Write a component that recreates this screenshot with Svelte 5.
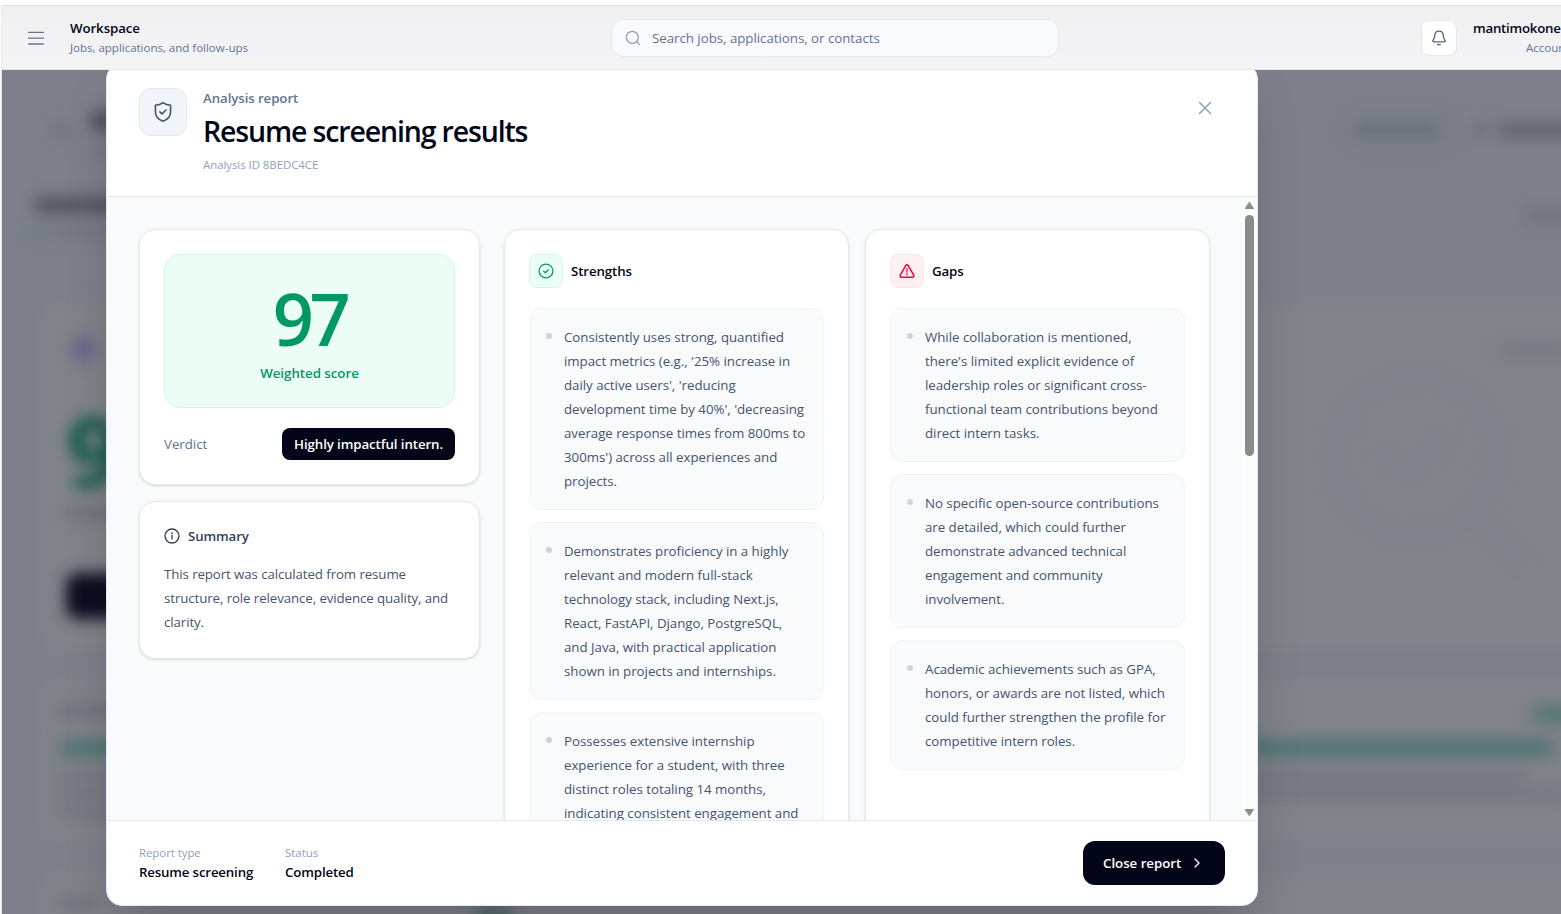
<script lang="ts">
  interface Finding {
    lines: string[];
  }

  let query = $state('');

  const strengths: Finding[] = [
    {
      lines: [
        'Consistently uses strong, quantified',
        "impact metrics (e.g., '25% increase in",
        "daily active users', 'reducing",
        "development time by 40%', 'decreasing",
        'average response times from 800ms to',
        "300ms') across all experiences and",
        'projects.'
      ]
    },
    {
      lines: [
        'Demonstrates proficiency in a highly',
        'relevant and modern full-stack',
        'technology stack, including Next.js,',
        'React, FastAPI, Django, PostgreSQL,',
        'and Java, with practical application',
        'shown in projects and internships.'
      ]
    },
    {
      lines: [
        'Possesses extensive internship',
        'experience for a student, with three',
        'distinct roles totaling 14 months,',
        'indicating consistent engagement and'
      ]
    }
  ];

  const gaps: Finding[] = [
    {
      lines: [
        'While collaboration is mentioned,',
        "there's limited explicit evidence of",
        'leadership roles or significant cross-',
        'functional team contributions beyond',
        'direct intern tasks.'
      ]
    },
    {
      lines: [
        'No specific open-source contributions',
        'are detailed, which could further',
        'demonstrate advanced technical',
        'engagement and community',
        'involvement.'
      ]
    },
    {
      lines: [
        'Academic achievements such as GPA,',
        'honors, or awards are not listed, which',
        'could further strengthen the profile for',
        'competitive intern roles.'
      ]
    }
  ];
</script>

{#snippet findings(items: Finding[])}
  <ul class="findings">
    {#each items as item}
      <li>
        <span class="bullet"></span>
        <p>
          {#each item.lines as line}
            <span class="line">{line}</span>
          {/each}
        </p>
      </li>
    {/each}
  </ul>
{/snippet}

<div class="shell">
  <header class="topbar">
    <svg class="menu" width="16" height="16" viewBox="0 0 16 16">
      <path d="M.6 2.4h14.8M.6 8.2h14.8M.6 14h14.8" />
    </svg>
    <div class="workspace">
      <strong>Workspace</strong>
      <span>Jobs, applications, and follow-ups</span>
    </div>
    <label class="search">
      <svg width="16" height="16" viewBox="0 0 16 16">
        <circle cx="7.3" cy="7.3" r="6" />
        <path d="m11.8 11.8 2.6 2.6" />
      </svg>
      <input type="text" placeholder="Search jobs, applications, or contacts" bind:value={query} />
    </label>
    <button class="bell" aria-label="Notifications">
      <svg width="18" height="18" viewBox="0 0 18 18">
        <path d="M9 2.200c-2.600 0-4.200 1.700-4.300 4.300-.1 2.400-.5 3.300-1.500 4.500-.8 1-.4 1.900.7 1.900h10.200c1.100 0 1.500-.9.7-1.900-1-1.200-1.400-2.100-1.500-4.500C13.200 3.900 11.600 2.200 9 2.200Z" />
        <path d="M7.700 15.400c.8.4 1.800.4 2.600 0" />
      </svg>
    </button>
    <div class="account">
      <strong>mantimokone</strong>
      <span>Account</span>
    </div>
  </header>

  <main class="stage">
    <!-- dimmed dashboard behind the dialog -->
    <svg class="backdrop" width="1559" height="844" viewBox="2 70 1559 844">
      <g class="panels">
        <rect x="40" y="302" width="1600" height="350" rx="16" />
        <rect x="40" y="678" width="1600" height="164" rx="16" />
        <rect x="40" y="870" width="1600" height="120" rx="16" />
      </g>
      <g class="blurred">
        <circle cx="61" cy="130" r="7" fill="#6c6e79" />
        <rect x="91" y="112" width="120" height="18" fill="#4d4e5c" />
        <rect x="92" y="146" width="100" height="8" fill="#747681" />
        <rect x="36" y="197" width="120" height="16" fill="#50515e" />
        <circle cx="38" cy="232" r="6" fill="#647d7d" />
        <rect x="52" y="228" width="90" height="9" fill="#70727d" />
        <rect x="1344" y="112" width="110" height="36" rx="8" fill="#7a7e87" />
        <rect x="1356" y="124" width="82" height="13" fill="#696e7a" />
        <circle cx="1481" cy="130" r="7" fill="#696b72" />
        <rect x="1500" y="123" width="80" height="14" fill="#60616c" />
        <rect x="1526" y="209" width="60" height="13" fill="#70727d" />
        <circle cx="84" cy="349" r="13" fill="#67658d" />
        <text x="67" y="487">9</text>
        <rect x="68" y="508" width="80" height="11" fill="#6d6e79" />
        <rect x="66" y="573" width="200" height="46" rx="11" fill="#0c0d20" />
        <rect x="1502" y="345" width="70" height="11" fill="#777883" />
        <g class="magnifier">
          <circle cx="1415" cy="457" r="80" />
          <path d="m1473 513 44 44M1386 457l22 17 35-34" />
        </g>
        <rect x="60" y="705" width="70" height="12" fill="#6e6f7a" />
        <rect x="60" y="740" width="1494" height="16" rx="8" fill="#4d7371" />
        <rect x="1533" y="706" width="50" height="17" rx="6" fill="#527671" />
        <rect x="60" y="770" width="1466" height="11" fill="#73747f" />
        <rect x="60" y="789" width="1510" height="11" fill="#73747f" />
        <rect x="60" y="807" width="60" height="11" fill="#73747f" />
        <rect x="62" y="898" width="36" height="11" fill="#6d6e79" />
        <rect x="476" y="908" width="36" height="16" fill="#47635f" />
      </g>
    </svg>

    <section class="dialog" role="dialog" aria-label="Resume screening results">
      <div class="dialog-head">
        <div class="shield">
          <svg width="24" height="24" viewBox="0 0 24 24">
            <path d="M12 2.600C9.600 4.300 7.200 5 4.400 5.300v6.300c0 5 3 8.200 7.600 9.700 4.600-1.500 7.600-4.700 7.600-9.700V5.300C16.800 5 14.400 4.300 12 2.600Z" />
            <path d="m8.900 11.800 2.100 2 4-3.800" />
          </svg>
        </div>
        <div class="heading">
          <p class="eyebrow">Analysis report</p>
          <h1>Resume screening results</h1>
          <p class="report-id">Analysis ID 8BEDC4CE</p>
        </div>
        <button class="close" aria-label="Close">
          <svg width="20" height="20" viewBox="0 0 20 20">
            <path d="m4.500 4.500 11 11M15.500 4.500l-11 11" />
          </svg>
        </button>
      </div>

      <div class="dialog-body">
        <div class="content">
          <div class="overview">
            <div class="card">
              <div class="score">
                <span class="value">97</span>
                <span class="caption">Weighted score</span>
              </div>
              <div class="verdict">
                <span>Verdict</span>
                <strong>Highly impactful intern.</strong>
              </div>
            </div>
            <div class="card summary">
              <h2>
                <svg width="16" height="16" viewBox="0 0 16 16">
                  <circle cx="8" cy="8" r="7" />
                  <path d="M8 7.400v3.700M8 4.600v1.200" />
                </svg>
                Summary
              </h2>
              <p>
                <span class="line">This report was calculated from resume</span>
                <span class="line">structure, role relevance, evidence quality, and</span>
                <span class="line">clarity.</span>
              </p>
            </div>
          </div>

          <div class="columns">
            <div class="card">
              <h3>
                <span class="tile good">
                  <svg width="16" height="16" viewBox="0 0 16 16">
                    <circle cx="8" cy="8" r="6.900" />
                    <path d="m5.700 8.200 1.600 1.500 3-3" />
                  </svg>
                </span>
                Strengths
              </h3>
              {@render findings(strengths)}
            </div>
            <div class="card">
              <h3>
                <span class="tile bad">
                  <svg width="16" height="16" viewBox="0 0 16 16">
                    <path d="M6.900 2.400 1.300 12.200c-.5 1 0 2 1.100 2h11.200c1.100 0 1.600-1 1.100-2L9.100 2.400c-.5-.9-1.700-.9-2.200 0Z" />
                    <path class="thin" d="M8 5.400v3.800M8 10.700v1.300" />
                  </svg>
                </span>
                Gaps
              </h3>
              {@render findings(gaps)}
            </div>
          </div>
        </div>
        <div class="scrollbar">
          <svg width="9" height="7" viewBox="0 0 9 7"><path d="M4.500 .5 8.500 6.500h-8z" /></svg>
          <div class="thumb"></div>
          <svg width="9" height="7" viewBox="0 0 9 7"><path d="M4.500 6.500 8.500 .5h-8z" /></svg>
        </div>
      </div>

      <footer>
        <div class="meta">
          <span>Report type</span>
          <strong>Resume screening</strong>
        </div>
        <div class="meta">
          <span>Status</span>
          <strong>Completed</strong>
        </div>
        <button class="done">
          Close report
          <svg width="16" height="16" viewBox="0 0 16 16"><path d="m6 4 4 4-4 4" /></svg>
        </button>
      </footer>
    </section>
  </main>
</div>

<style>
  :global(body) {
    background: #fff;
    overflow: hidden;
  }

  * {
    box-sizing: border-box;
  }

  h1, h2, h3, p, ul {
    margin: 0;
    padding: 0;
  }

  strong {
    font-weight: 600;
    letter-spacing: -0.1px;
  }

  button, input {
    font: inherit;
    letter-spacing: inherit;
  }

  svg {
    flex: none;
    fill: none;
    stroke: currentColor;
    stroke-width: 1.3;
    stroke-linecap: round;
    stroke-linejoin: round;
  }

  .shell {
    width: 1560px;
    height: 909px;
    margin: 5px 0 0 1px;
    border-top: 1px solid #dfe0e4;
    border-left: 1px solid #e2e8f0;
    display: flex;
    flex-direction: column;
    overflow: hidden;
    font-family: "Open Sans", "Noto Sans", sans-serif;
    font-size: 13.3px;
    line-height: 20px;
    letter-spacing: -0.03px;
    color: #020618;
  }

  .topbar {
    flex: none;
    height: 64px;
    display: flex;
    align-items: center;
    padding-left: 26px;
    background: linear-gradient(#f0f0f2, #f4f4f6);
    border-bottom: 1px solid #e2e8f0;
    position: relative;
    z-index: 2;
  }

  .menu {
    color: #62748e;
  }

  .workspace, .account {
    display: flex;
    flex-direction: column;
  }

  .workspace {
    flex: none;
    width: 541px;
    margin-left: 26px;
  }

  .workspace span, .account span {
    font-size: 11.55px;
    color: #62748e;
  }

  .search {
    flex: none;
    width: 448px;
    height: 38px;
    display: flex;
    align-items: center;
    gap: 11px;
    padding: 0 13px;
    border: 1px solid #e2e8f0;
    border-radius: 12px;
    background: #f8fafc;
    color: #90a1b9;
  }

  .search input {
    flex: 1;
    padding: 0;
    border: 0;
    outline: 0;
    background: none;
  }

  .search input::placeholder {
    color: #62748e;
    opacity: 1;
  }

  .bell {
    flex: none;
    width: 36px;
    height: 36px;
    margin-left: 362px;
    padding: 0;
    display: grid;
    place-items: center;
    border: 1px solid #e2e8f0;
    border-radius: 8px;
    background: #fff;
    color: #53637b;
  }

  .account {
    flex: none;
    margin-left: 16px;
    white-space: nowrap;
  }

  .account strong {
    letter-spacing: -0.25px;
  }

  .account span {
    padding-left: 53px;
  }

  .stage {
    flex: 1;
    min-height: 0;
    position: relative;
    background: #7d7f8a;
  }

  .backdrop {
    position: absolute;
    inset: 0;
    stroke: none;
  }

  .panels {
    fill: #80838a;
    filter: blur(8px);
  }

  .blurred {
    filter: blur(7.5px);
  }

  .blurred text {
    font-size: 96px;
    font-weight: 700;
    fill: #0a5845;
  }

  .magnifier {
    stroke: #7d7f8a;
    stroke-width: 12;
  }

  .dialog {
    position: relative;
    width: 1152px;
    height: 843px;
    margin: -7px 0 0 104px;
    display: flex;
    flex-direction: column;
    border: 1px solid #e2e8f0;
    border-radius: 16px;
    background: #fff;
    overflow: hidden;
    box-shadow: 0 25px 50px -12px rgba(0, 0, 0, 0.25);
  }

  .dialog-head {
    flex: none;
    height: 133px;
    display: flex;
    align-items: flex-start;
    gap: 16px;
    padding: 24px 42px 0 32px;
    border-bottom: 1px solid #e2e8f0;
  }

  .shield {
    width: 48px;
    height: 48px;
    display: grid;
    place-items: center;
    border: 1px solid #e2e8f0;
    border-radius: 12px;
    background: #f1f5f9;
    color: #45556c;
  }

  .shield svg {
    stroke-width: 1.6;
  }

  .heading {
    flex: 1;
  }

  .eyebrow {
    font-weight: 600;
    letter-spacing: -0.1px;
    color: #62748e;
  }

  h1 {
    margin-top: 3px;
    font-size: 28.5px;
    line-height: 40px;
    font-weight: 600;
    letter-spacing: -1.15px;
  }

  .report-id {
    margin-top: 4px;
    font-size: 11.4px;
    color: #90a1b9;
  }

  .close {
    width: 20px;
    height: 20px;
    margin-top: 10px;
    padding: 0;
    border: 0;
    background: none;
    color: #90a1b9;
  }

  .close svg {
    display: block;
    stroke-width: 1.5;
  }

  .dialog-body {
    flex: 1;
    min-height: 0;
    display: flex;
    background: #f8fafc;
  }

  .content {
    flex: 1;
    display: grid;
    grid-template-columns: 341px 1fr;
    align-items: start;
    gap: 24px;
    padding: 32px 32px 0;
    overflow: hidden;
  }

  .overview {
    display: flex;
    flex-direction: column;
    gap: 16px;
  }

  .columns {
    display: grid;
    grid-template-columns: 1fr 1fr;
    gap: 16px;
  }

  .card {
    padding: 24px;
    border: 1px solid #e2e8f0;
    border-radius: 16px;
    background: #fff;
    box-shadow: 0 1px 3px rgba(0, 0, 0, 0.1), 0 1px 2px -1px rgba(0, 0, 0, 0.1);
  }

  .score {
    height: 154px;
    display: flex;
    flex-direction: column;
    align-items: center;
    padding-top: 24px;
    border: 1px solid #d0fae5;
    border-radius: 16px;
    background: #ecfdf5;
    color: #009966;
  }

  .value {
    height: 72px;
    font-size: 72px;
    line-height: 78px;
    font-weight: 600;
    letter-spacing: -4.5px;
  }

  .caption {
    margin-top: 12px;
    font-weight: 600;
  }

  .verdict {
    display: flex;
    align-items: center;
    justify-content: space-between;
    margin-top: 20px;
    color: #62748e;
  }

  .verdict strong {
    padding: 6px 12px;
    border-radius: 8px;
    background: #020618;
    color: #fff;
  }

  h2, h3 {
    display: flex;
    align-items: center;
    gap: 8px;
    font-size: inherit;
    font-weight: 600;
    letter-spacing: -0.13px;
  }

  h2 {
    margin-bottom: 16px;
    color: #314158;
  }

  .summary p, .findings p {
    line-height: 24px;
    color: #45556c;
  }

  .summary p {
    letter-spacing: -0.1px;
  }

  .line {
    display: block;
    white-space: nowrap;
  }

  h3 {
    margin-bottom: 20px;
  }

  .tile {
    width: 34px;
    height: 34px;
    display: grid;
    place-items: center;
    border: 1px solid;
    border-radius: 8px;
  }

  .good {
    background: #ecfdf5;
    border-color: #d0fae5;
  }

  .good svg {
    color: #009966;
  }

  .bad {
    background: #fff1f2;
    border-color: #ffe4e6;
  }

  .bad svg {
    color: #ec003f;
    stroke-width: 1.5;
  }

  .bad .thin {
    stroke-width: 1.2;
  }

  .findings {
    display: flex;
    flex-direction: column;
    gap: 12px;
    list-style: none;
  }

  .findings li {
    display: flex;
    gap: 12px;
    padding: 16px;
    border: 1px solid #f1f5f9;
    border-radius: 12px;
    background: #f8fafc;
  }

  .findings p {
    flex: 1;
    min-width: 0;
  }

  .bullet {
    flex: none;
    width: 6px;
    height: 6px;
    margin-top: 8px;
    border-radius: 50%;
    background: #cad5e2;
  }

  .scrollbar {
    flex: none;
    width: 15px;
    display: flex;
    flex-direction: column;
    align-items: center;
    padding: 5px 0 4px;
    background: #fcfcfc;
  }

  .scrollbar svg {
    fill: #8b8b8b;
    stroke: #8b8b8b;
    stroke-width: 1;
  }

  .thumb {
    width: 9px;
    height: 241px;
    margin: 6px 0 auto;
    border-radius: 5px;
    background: #8b8b8b;
  }

  footer {
    flex: none;
    height: 85px;
    display: flex;
    align-items: center;
    gap: 32px;
    padding: 0 32px;
    border-top: 1px solid #e2e8f0;
  }

  .meta {
    display: flex;
    flex-direction: column;
  }

  .meta span {
    font-size: 11.4px;
    line-height: 18px;
    color: #90a1b9;
  }

  .meta strong {
    letter-spacing: -0.18px;
  }

  .done {
    width: 142px;
    height: 44px;
    margin-left: auto;
    padding: 0 20px;
    display: flex;
    align-items: center;
    justify-content: space-between;
    border: 0;
    border-radius: 12px;
    background: #020618;
    color: #fff;
    font-weight: 600;
    white-space: nowrap;
  }
</style>
